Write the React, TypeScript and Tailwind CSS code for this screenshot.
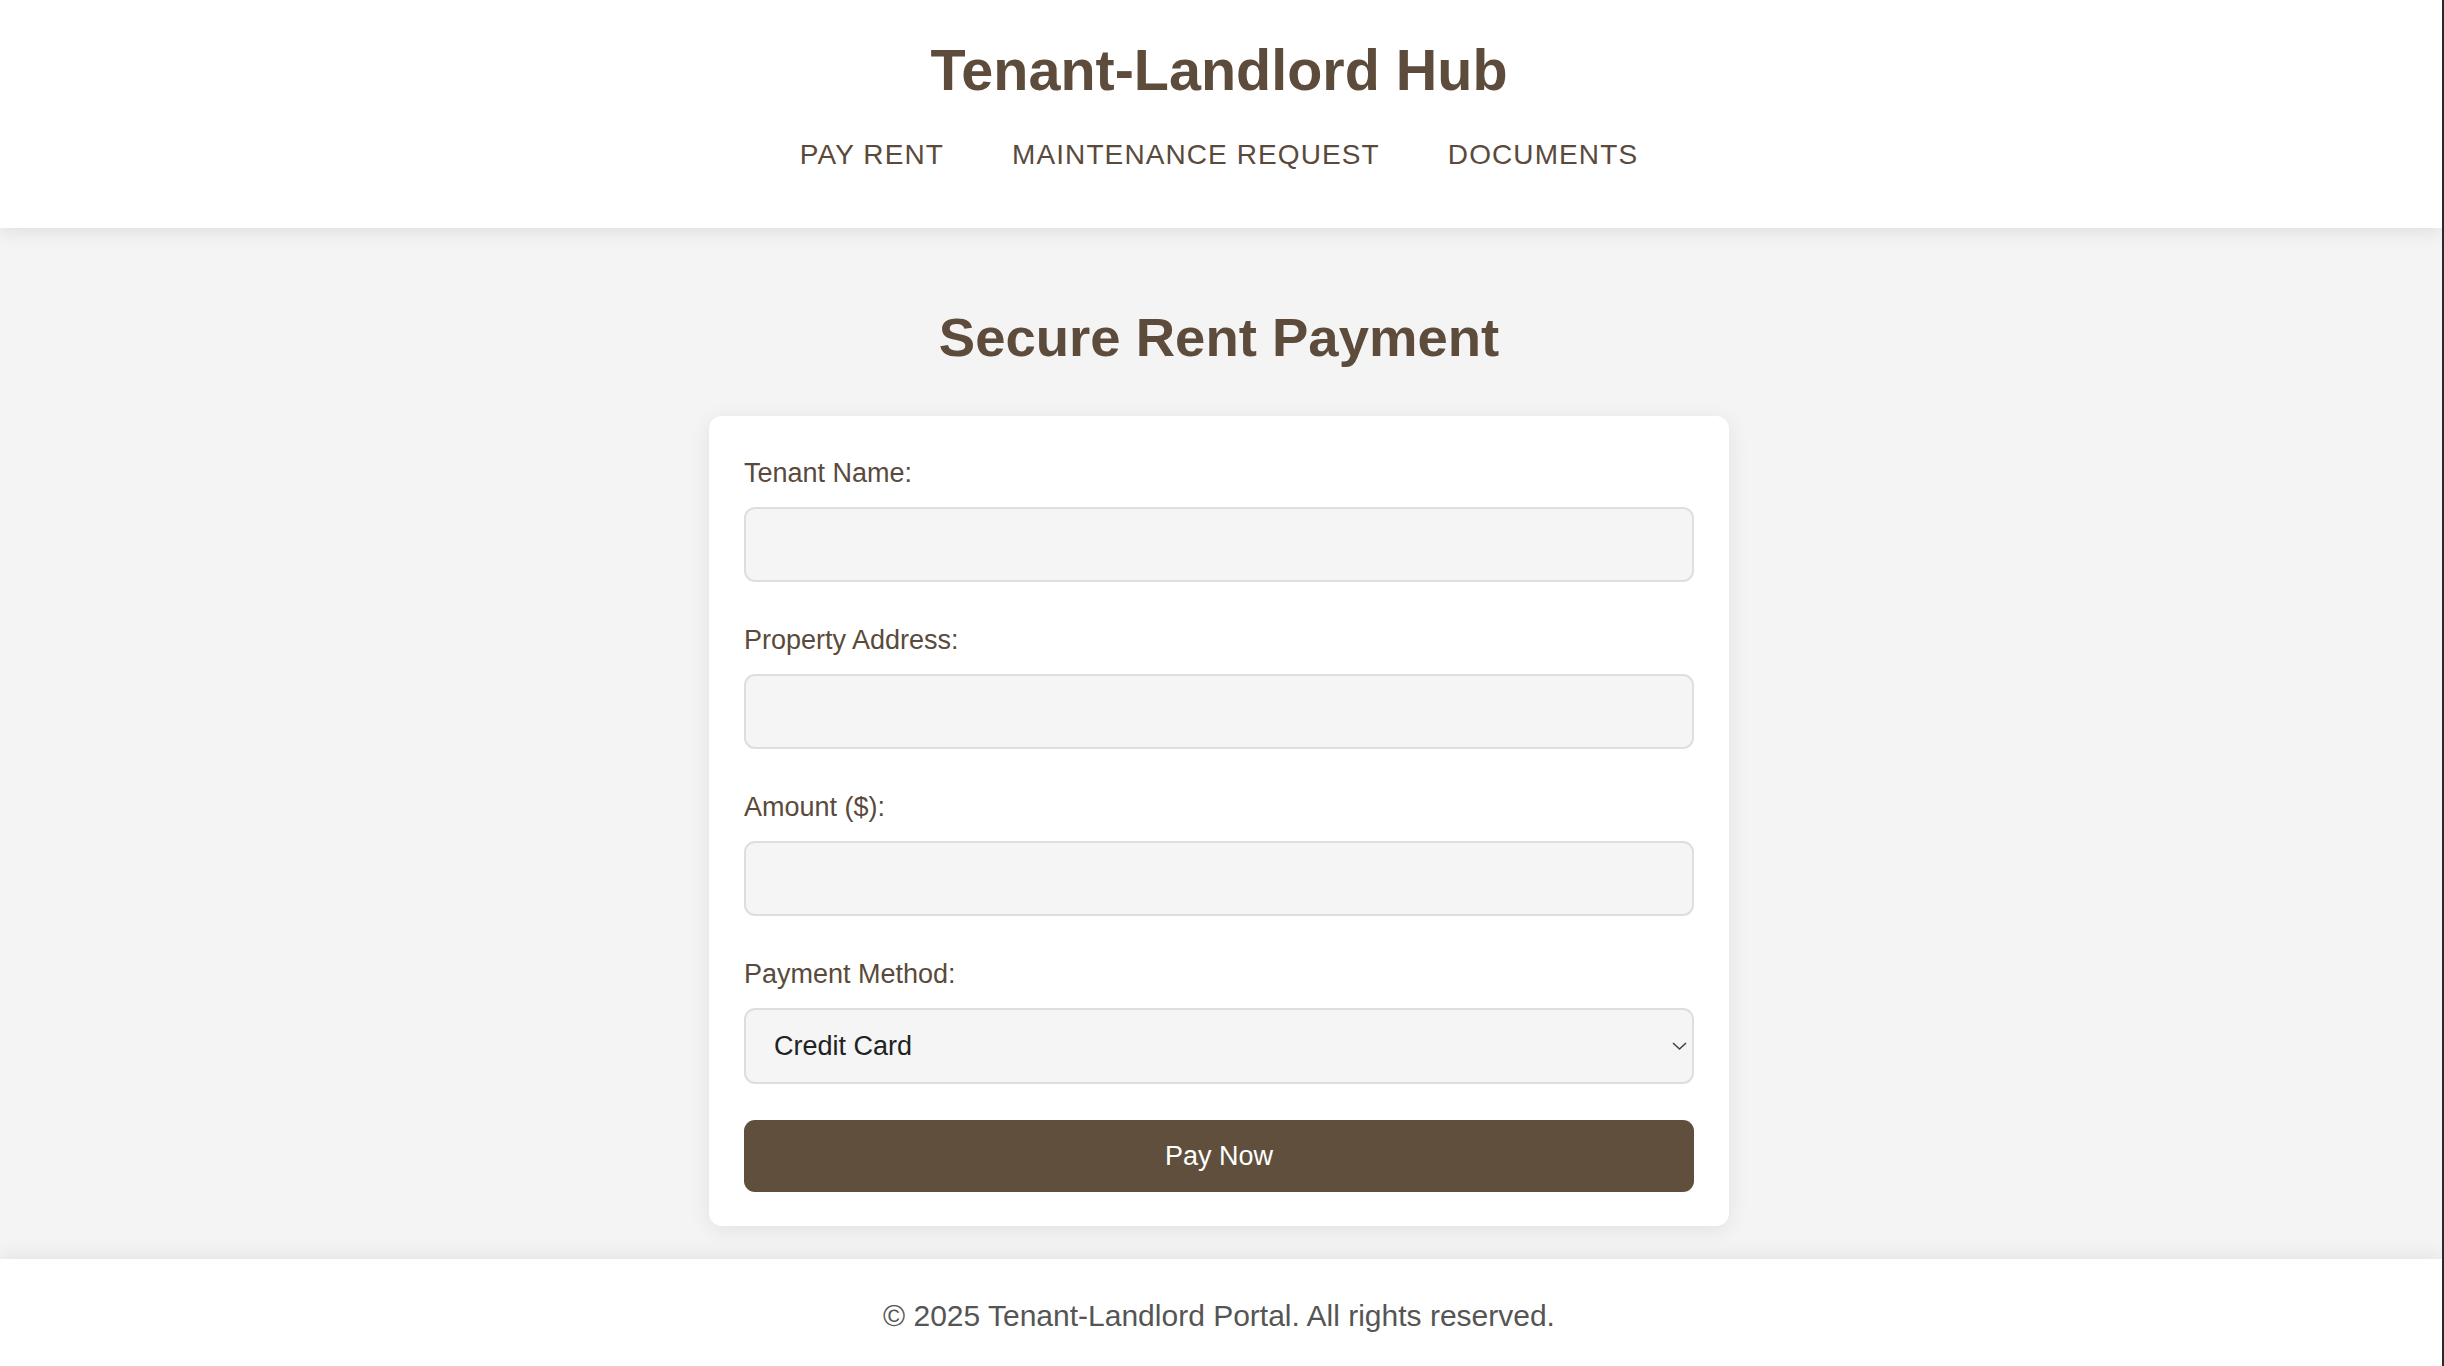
import React, { useState } from 'react';

const font = { fontFamily: '"Liberation Sans", Arial, Helvetica, sans-serif' };

function Field({ label, value, onChange }: { label: string; value: string; onChange: (v: string) => void }) {
  return (
    <div className="mb-[36px]">
      <label className="block pt-[2px] text-[27px] leading-[41px] text-[#5a4a3c]">{label}</label>
      <input
        value={value}
        onChange={(e) => onChange(e.target.value)}
        className="mt-[13px] block h-[75px] w-full rounded-[11px] border-2 border-[#dedede] bg-[#f5f5f5] px-[26px] text-[27px] text-[#333] outline-none"
      />
    </div>
  );
}

export default function App() {
  const [name, setName] = useState('');
  const [address, setAddress] = useState('');
  const [amount, setAmount] = useState('');
  const [method, setMethod] = useState('Credit Card');

  return (
    <div style={font} className="flex min-h-screen flex-col border-r-2 border-[#2b2b2b] bg-[#f4f4f4]">
      {/* Header */}
      <header className="relative z-10 bg-white pr-[4px] pt-[42px] pb-[59px] shadow-[0_4px_18px_rgba(0,0,0,0.09)]">
        <h1 className="text-center text-[57.5px] font-bold leading-[57px] text-[#5d4c3b]">Tenant-Landlord Hub</h1>
        <nav className="mt-[42px] flex justify-center gap-[68px] text-[28px] leading-[28px] tracking-[1.1px] text-[#5a4a3c]">
          <a href="#">PAY RENT</a>
          <a href="#">MAINTENANCE REQUEST</a>
          <a href="#">DOCUMENTS</a>
        </nav>
      </header>

      {/* Main */}
      <main className="flex-1 pr-[4px] pt-[83px] pb-[33px]">
        <h2 className="text-center text-[54.5px] font-bold leading-[54px] text-[#5d4c3b]">Secure Rent Payment</h2>
        <form
          onSubmit={(e) => e.preventDefault()}
          className="mx-auto mt-[51px] w-[1020px] rounded-[13px] bg-white px-[35px] pt-[35px] pb-[34px] shadow-[0_4px_22px_rgba(0,0,0,0.08)]"
        >
          <Field label="Tenant Name:" value={name} onChange={setName} />
          <Field label="Property Address:" value={address} onChange={setAddress} />
          <Field label="Amount ($):" value={amount} onChange={setAmount} />

          <label className="block pt-[2px] text-[27px] leading-[41px] text-[#5a4a3c]">Payment Method:</label>
          <div className="relative mt-[13px]">
            <select
              value={method}
              onChange={(e) => setMethod(e.target.value)}
              className="block h-[76px] w-full appearance-none rounded-[11px] border-2 border-[#dedede] bg-[#f5f5f5] pl-[28px] text-[27px] text-[#222] outline-none"
            >
              <option>Credit Card</option>
              <option>Bank Transfer</option>
              <option>PayPal</option>
            </select>
            <svg
              className="pointer-events-none absolute right-[7px] top-1/2 -translate-y-1/2"
              width="15"
              height="9"
              viewBox="0 0 15 9"
              fill="none"
            >
              <path d="M1 1.5l6.5 6 6.5-6" stroke="#444" strokeWidth="1.6" />
            </svg>
          </div>

          <button
            type="submit"
            className="mt-[36px] block h-[72px] w-full rounded-[11px] bg-[#604f3c] text-[27px] text-white"
          >
            Pay Now
          </button>
        </form>
      </main>

      {/* Footer */}
      <footer className="relative z-10 bg-white pr-[4px] pt-[42px] pb-[35px] text-center text-[30px] leading-[30px] text-[#555] shadow-[0_-4px_18px_rgba(0,0,0,0.07)]">
        © 2025 Tenant-Landlord Portal. All rights reserved.
      </footer>
    </div>
  );
}
